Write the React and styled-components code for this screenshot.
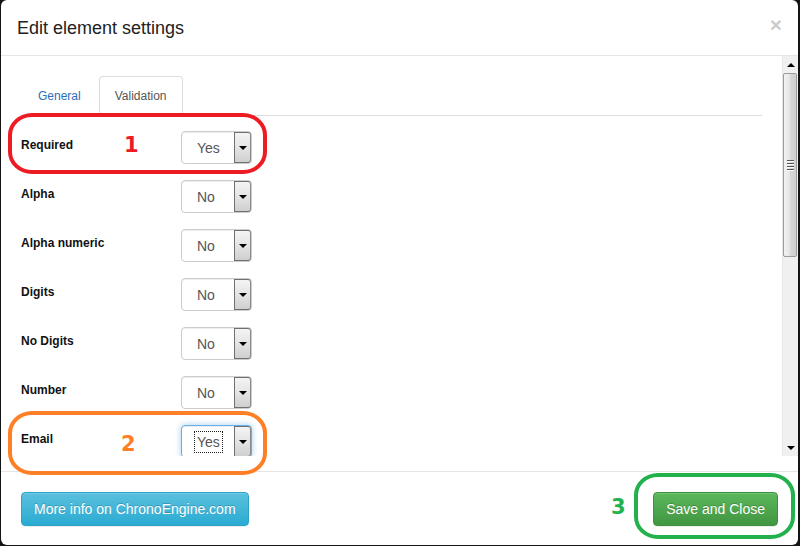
import React from "react";
import styled, { createGlobalStyle, css } from "styled-components";

const Global = createGlobalStyle`
  html, body { margin: 0; padding: 0; background: #141414; }
  body { font-family: "Liberation Sans", Arial, sans-serif; }
  * { box-sizing: border-box; }
`;

const Page = styled.div`
  position: relative;
  width: 800px;
  height: 546px;
  background: #141414;
  overflow: hidden;
`;

const Modal = styled.div`
  margin-left: 1px;
  width: 797px;
  height: 545px;
  background: #fff;
  border-radius: 6px;
  display: flex;
  flex-direction: column;
  overflow: hidden;
`;

const Header = styled.div`
  height: 56px;
  flex: none;
  border-bottom: 1px solid #e5e5e5;
  padding: 15px 16px 0 16px;
  display: flex;
  justify-content: space-between;
  align-items: flex-start;
`;

const Title = styled.h4`
  margin: 0;
  font-size: 18px;
  line-height: 26px;
  font-weight: normal;
  color: #222;
`;

const Close = styled.span`
  font-size: 21px;
  font-weight: bold;
  line-height: 22px;
  color: #000;
  opacity: 0.2;
  margin-top: -1px;
`;

const Body = styled.div`
  height: 400px;
  flex: none;
  display: flex;
  flex-direction: row;
`;

const Content = styled.div`
  flex: 1;
  padding: 20px 20px 0 20px;
  overflow: hidden;
`;

const Tabs = styled.ul`
  list-style: none;
  margin: 0 0 15px 0;
  padding: 0 0 0 1px;
  display: flex;
  border-bottom: 1px solid #ddd;
`;

const Tab = styled.li`
  margin-bottom: -1px;
  margin-right: 2px;
  padding: 10px 15px;
  font-size: 12px;
  line-height: 18px;
  border: 1px solid transparent;
  border-radius: 4px 4px 0 0;
  color: #2a6ebb;
  ${(p) =>
    p.$active &&
    css`
      color: #555;
      background: #fff;
      border-color: #ddd #ddd transparent #ddd;
    `}
`;

const Row = styled.div`
  display: flex;
  align-items: flex-start;
  height: 33px;
  margin-bottom: 16px;
`;

const Label = styled.label`
  width: 160px;
  padding-top: 7px;
  font-size: 12px;
  line-height: 14px;
  font-weight: bold;
  color: #111;
`;

const Select = styled.div`
  width: 71px;
  height: 33px;
  border: 1px solid #ccc;
  border-radius: 4px;
  background: #fff;
  box-shadow: inset 0 1px 1px rgba(0, 0, 0, 0.075);
  display: flex;
  align-items: stretch;
  ${(p) =>
    p.$focused &&
    css`
      border-color: #66afe9;
      box-shadow: inset 0 1px 1px rgba(0, 0, 0, 0.075), 0 0 6px rgba(102, 175, 233, 0.6);
    `}
`;

const Value = styled.div`
  flex: 1;
  display: flex;
  align-items: center;
  padding-left: 15px;
  font-size: 14px;
  color: #555;
`;

const ValueText = styled.span`
  ${(p) =>
    p.$focused &&
    css`
      outline: 1px dotted #222;
      outline-offset: 2px;
    `}
`;

const Arrow = styled.div`
  width: 17px;
  border: 1px solid #707070;
  border-right-color: #8a8a8a;
  border-radius: 0 3px 3px 0;
  background: linear-gradient(to bottom, #f4f4f4 0%, #e4e4e4 50%, #cfcfcf 100%);
  display: flex;
  align-items: center;
  justify-content: center;
`;

const Tri = styled.div`
  width: 0;
  height: 0;
  border-left: 4px solid transparent;
  border-right: 4px solid transparent;
  border-${(p) => (p.$up ? "bottom" : "top")}: 4px solid #000;
`;

const Scrollbar = styled.div`
  width: 16px;
  background: #f0f0f0;
  border-left: 1px solid #e8e8e8;
  display: flex;
  flex-direction: column;
`;

const ScrollBtn = styled.div`
  height: 17px;
  display: flex;
  align-items: center;
  justify-content: center;
`;

const Thumb = styled.div`
  height: 184px;
  margin: 0 1px 0 0;
  border: 1px solid #9b9b9b;
  border-radius: 2px;
  background: linear-gradient(to right, #f2f2f2 0%, #e6e6e6 45%, #d6d6d6 55%, #cfcfcf 100%);
  display: flex;
  align-items: center;
  justify-content: center;
`;

const Grip = styled.div`
  width: 7px;
  display: flex;
  flex-direction: column;
  gap: 1px;
  & > i {
    display: block;
    height: 1px;
    background: #555;
    border-bottom: 1px solid #fff;
    box-sizing: content-box;
  }
`;

const Track = styled.div`
  flex: 1;
`;

const Spacer = styled.div`
  height: 15px;
  flex: none;
`;

const Footer = styled.div`
  flex: 1;
  border-top: 1px solid #e5e5e5;
  padding: 20px;
  display: flex;
  justify-content: space-between;
  align-items: flex-start;
`;

const Button = styled.button`
  height: 34px;
  padding: 0 12px;
  font-family: "Liberation Sans", Arial, sans-serif;
  font-size: 14px;
  color: #fff;
  border-radius: 4px;
  border: 1px solid;
  text-shadow: 0 -1px 0 rgba(0, 0, 0, 0.2);
  box-shadow: inset 0 1px 0 rgba(255, 255, 255, 0.15), 0 1px 1px rgba(0, 0, 0, 0.075);
  ${(p) =>
    p.$variant === "info"
      ? css`
          background: linear-gradient(to bottom, #5bc0de 0%, #2aabd2 100%);
          border-color: #28a4c9;
        `
      : css`
          background: linear-gradient(to bottom, #5cb85c 0%, #419641 100%);
          border-color: #3e8f3e;
        `}
`;

const Mark = styled.div`
  position: absolute;
  border: 4px solid ${(p) => p.$color};
  border-radius: 24px / 22px;
  pointer-events: none;
`;

const Num = styled.div`
  position: absolute;
  font-family: "DejaVu Sans", sans-serif;
  font-weight: bold;
  font-size: 21px;
  line-height: 22px;
  color: ${(p) => p.$color};
`;

const fields = [
  ["Required", "Yes"],
  ["Alpha", "No"],
  ["Alpha numeric", "No"],
  ["Digits", "No"],
  ["No Digits", "No"],
  ["Number", "No"],
  ["Email", "Yes", true],
];

export default function App() {
  return (
    <>
      <Global />
      <Page>
        <Modal>
          <Header>
            <Title>Edit element settings</Title>
            <Close>×</Close>
          </Header>
          <Body>
            <Content>
              <Tabs>
                <Tab>General</Tab>
                <Tab $active>Validation</Tab>
              </Tabs>
              {fields.map(([label, value, focused]) => (
                <Row key={label}>
                  <Label>{label}</Label>
                  <Select $focused={focused}>
                    <Value>
                      <ValueText $focused={focused}>{value}</ValueText>
                    </Value>
                    <Arrow>
                      <Tri />
                    </Arrow>
                  </Select>
                </Row>
              ))}
            </Content>
            <Scrollbar>
              <ScrollBtn>
                <Tri $up />
              </ScrollBtn>
              <Thumb>
                <Grip>
                  <i />
                  <i />
                  <i />
                  <i />
                </Grip>
              </Thumb>
              <Track />
              <ScrollBtn>
                <Tri />
              </ScrollBtn>
            </Scrollbar>
          </Body>
          <Spacer />
          <Footer>
            <Button $variant="info">More info on ChronoEngine.com</Button>
            <Button $variant="success">Save and Close</Button>
          </Footer>
        </Modal>
        <Mark $color="#ed1c24" style={{ left: 8, top: 113, width: 259, height: 61 }} />
        <Num $color="#ed1c24" style={{ left: 124, top: 134 }}>1</Num>
        <Mark $color="#ff7f27" style={{ left: 8, top: 411, width: 259, height: 64 }} />
        <Num $color="#ff7f27" style={{ left: 121, top: 433 }}>2</Num>
        <Mark $color="#22b14c" style={{ left: 634, top: 473, width: 161, height: 66 }} />
        <Num $color="#22b14c" style={{ left: 611, top: 496 }}>3</Num>
      </Page>
    </>
  );
}
